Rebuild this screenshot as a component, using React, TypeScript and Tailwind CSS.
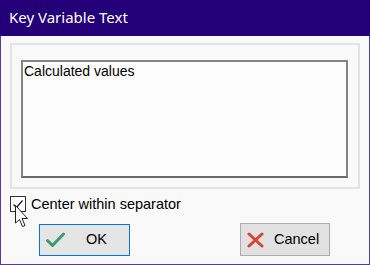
import React from "react";

export default function App() {
  return (
    <div className="relative w-[370px] h-[265px] bg-[#f9f9f9] border-x border-b border-[#5a3aa0] flex flex-col" style={{ fontFamily: '"Liberation Sans", Arial, sans-serif' }}>
      <div className="h-[36px] bg-[#230078] flex items-center pl-[9px] shrink-0 -mx-px">
        <span className="text-white text-[15px] leading-none pb-[2px]" style={{ fontFamily: '"Noto Sans", "Open Sans", sans-serif' }}>Key Variable Text</span>
      </div>
      <div className="mx-[9px] mt-[7px] h-[146px] border-2 border-[#e4e4e4] pl-[9px] pr-[10px] pt-[15px] pb-[9px] flex">
        <div className="flex-1 border-2 border-[#848484] border-b-[#6a6a6a] bg-[#fcfcfc] px-[1px] pt-[1px]">
          <div className="text-[14px] leading-[17px] text-black">Calculated values</div>
        </div>
      </div>
      <div className="flex items-center mt-[7px] ml-[9px] h-[16px]">
        <div className="w-[16px] h-[16px] border border-[#333333] bg-white flex items-center justify-center">
          <svg width="12" height="12" viewBox="0 0 12 12">
            <path d="M1.5 6.5 L4.5 9.5 L10.5 2.5" fill="none" stroke="#222" strokeWidth="1.3" />
          </svg>
        </div>
        <span className="ml-[5px] text-[14.5px] leading-none text-black">Center within separator</span>
      </div>
      <div className="flex mt-[12px] ml-[38px] gap-[110px]">
        <div className="w-[91px] h-[32px] border border-[#0078d7] bg-[#e5e5e5] flex items-center">
          <svg className="ml-[6px]" width="19" height="16" viewBox="0 0 19 16">
            <path d="M1.5 8.5 L6.5 13.5 L17.5 2" fill="none" stroke="#3d9a6d" strokeWidth="3" strokeLinecap="round" strokeLinejoin="round" />
          </svg>
          <span className="ml-[21px] text-[14.5px] text-black">OK</span>
        </div>
        <div className="w-[90px] h-[33px] -mt-px border border-[#adadad] bg-[#e1e1e1] flex items-center">
          <svg className="ml-[6px]" width="17" height="16" viewBox="0 0 17 16">
            <path d="M2 2 L15 14 M15 2 L2 14" fill="none" stroke="#d9442f" strokeWidth="3" strokeLinecap="round" />
          </svg>
          <span className="ml-[10px] text-[14.5px] text-black">Cancel</span>
        </div>
      </div>
      <svg className="absolute left-[13px] top-[204px]" width="16" height="26" viewBox="0 0 16 26">
        <path d="M1.5 1.5 L1.5 19 L5.5 15.5 L8.5 22.5 L11 21.5 L8 14.5 L13.5 14.5 Z" fill="#ffffff" stroke="#222" strokeWidth="1" strokeLinejoin="round" />
      </svg>
    </div>
  );
}
